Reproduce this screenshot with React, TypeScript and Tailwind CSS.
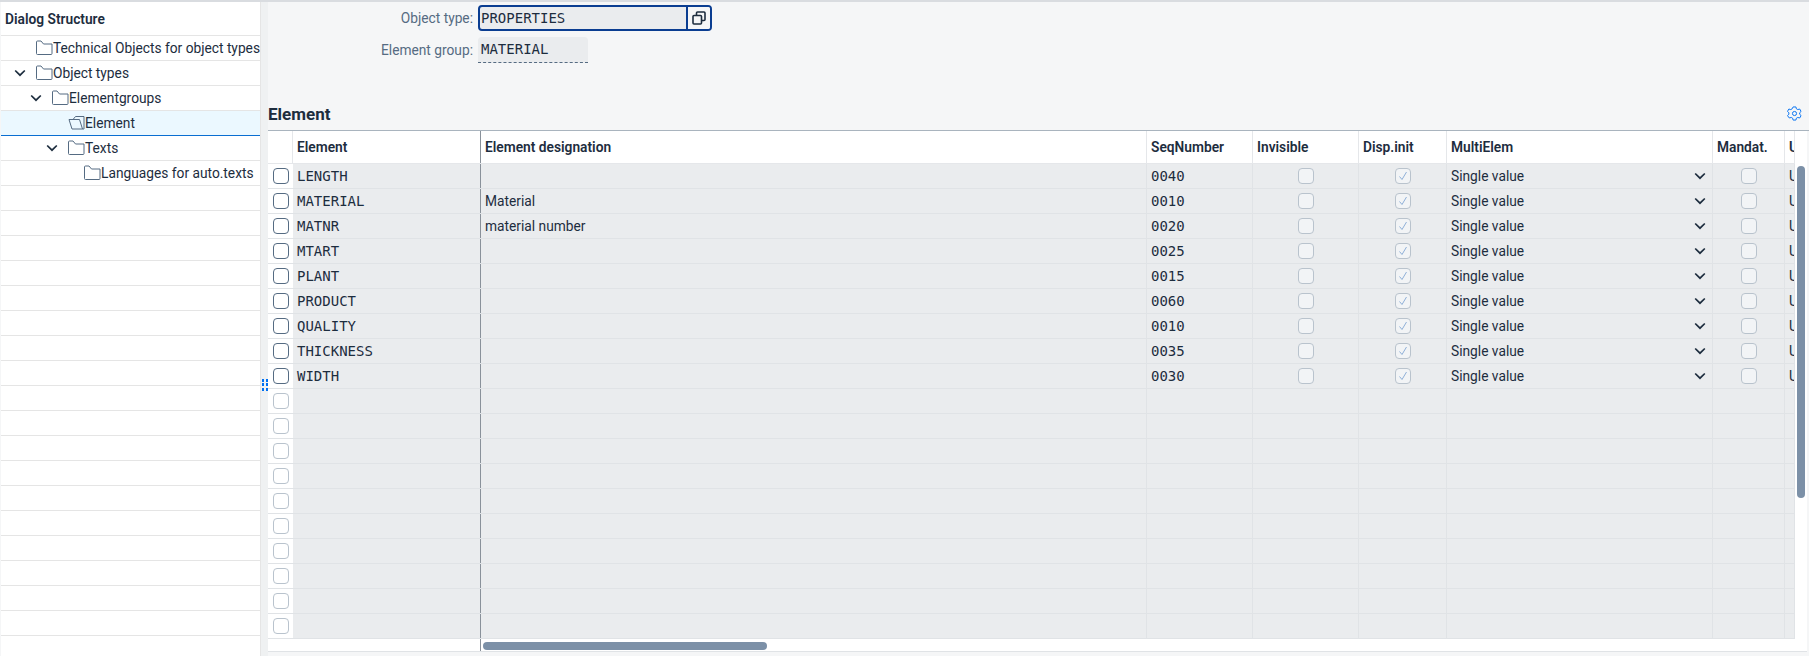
import React from 'react';

const Folder: React.FC<{ open?: boolean }> = ({ open }) => (
  <svg className="w-[17px] h-[16px] shrink-0" viewBox="0 0 17 16" fill="none" stroke="#556b82" strokeWidth="1">
    {open ? (
      <path d="M5 4.500 7.500 1.500h8.500v12.500H4L1 4.500h10.500l3 9.500" strokeLinejoin="round" />
    ) : (
      <path d="M.5 13.500V2a1 1 0 0 1 1-1H5l2.500 3h8.500v9.500a1 1 0 0 1-1 1H1.500a1 1 0 0 1-1-1z" strokeLinejoin="round" />
    )}
  </svg>
);

const Chevron: React.FC = () => (
  <svg className="w-[12px] h-[8px] shrink-0" viewBox="0 0 12 8" fill="none" stroke="#1d2d3e" strokeWidth="1.7">
    <path d="M1.200 1.500 6 6.200l4.800-4.700" />
  </svg>
);

const treeRows = [
  { label: 'Technical Objects for object types', indent: 'pl-[35px]' },
  { label: 'Object types', indent: 'pl-[13px]', chevron: true },
  { label: 'Elementgroups', indent: 'pl-[29px]', chevron: true },
  { label: 'Element', indent: 'pl-[67px]', open: true },
  { label: 'Texts', indent: 'pl-[45px]', chevron: true },
  { label: 'Languages for auto.texts', indent: 'pl-[83px]' },
];

const rows = [
  ['LENGTH', '', '0040'],
  ['MATERIAL', 'Material', '0010'],
  ['MATNR', 'material number', '0020'],
  ['MTART', '', '0025'],
  ['PLANT', '', '0015'],
  ['PRODUCT', '', '0060'],
  ['QUALITY', '', '0010'],
  ['THICKNESS', '', '0035'],
  ['WIDTH', '', '0030'],
];

const gridCols = 'grid-cols-[25px_188px_666px_106px_106px_88px_266px_72px_10px]';
const mono = "font-['DejaVu_Sans_Mono',monospace] text-[14px] text-[#1d2d3e]";

const ReadOnlyBox: React.FC<{ checked?: boolean }> = ({ checked }) => (
  <div className="w-[16px] h-[16px] rounded-[4px] border border-[#b9c3cd] bg-[#f2f4f6] flex items-center justify-center">
    {checked && (
      <svg className="w-[10px] h-[10px]" viewBox="0 0 10 10" fill="none" stroke="#8fb0d8" strokeWidth="1">
        <path d="M1.500 5.500 4 8.500 8.500 1" />
      </svg>
    )}
  </div>
);

const HeaderCell: React.FC<{ label?: string; dark?: boolean }> = ({ label, dark }) => (
  <div className={`flex items-center pl-[4px] overflow-hidden whitespace-nowrap font-semibold text-[#1d2d3e] border-r ${dark ? 'border-[#89919a]' : 'border-[#e5e7ea]'}`}>
    {label}
  </div>
);

const Cell: React.FC<{ children?: React.ReactNode; dark?: boolean; center?: boolean }> = ({ children, dark, center }) => (
  <div className={`flex items-center overflow-hidden whitespace-nowrap bg-[#eaecee] border-r ${center ? 'justify-center' : 'pl-[4px]'} ${dark ? 'border-[#89919a]' : 'border-[#e0e3e6]'}`}>
    {children}
  </div>
);

const DataRow: React.FC<{ row?: string[] }> = ({ row }) => (
  <div className={`grid ${gridCols} h-[25px] shrink-0 border-b border-[#e0e3e6]`}>
    <div className="flex items-center pl-[5px] bg-white">
      <div className={`w-[16px] h-[16px] rounded-[4px] border bg-white ${row ? 'border-[#556b82]' : 'border-[#b9c3cd]'}`} />
    </div>
    <Cell dark>{row && <span className={mono}>{row[0]}</span>}</Cell>
    <Cell>{row && <span>{row[1]}</span>}</Cell>
    <Cell>{row && <span className={mono}>{row[2]}</span>}</Cell>
    <Cell center>{row && <ReadOnlyBox />}</Cell>
    <Cell center>{row && <ReadOnlyBox checked />}</Cell>
    <Cell>
      {row && (
        <div className="flex flex-1 items-center justify-between pr-[6px]">
          <span>Single value</span>
          <Chevron />
        </div>
      )}
    </Cell>
    <Cell center>{row && <ReadOnlyBox />}</Cell>
    <Cell>{row && <span>U</span>}</Cell>
  </div>
);

const App: React.FC = () => {
  return (
    <div className="w-[1809px] h-[656px] overflow-hidden flex flex-col bg-[#f5f6f7] font-['Roboto',sans-serif] text-[13.75px] text-[#1d2d3e]">
      <div className="h-[2px] bg-[#d9dce0] shrink-0" />
      <div className="flex flex-1 min-h-0">
        {/* tree panel */}
        <div className="w-[260px] shrink-0 ml-[1px] bg-white border-r border-[#e5e5e5] flex flex-col overflow-hidden">
          <div className="h-[34px] shrink-0 flex items-center pl-[4px] pt-[2px] font-semibold border-b border-[#e5e5e5]">Dialog Structure</div>
          {treeRows.map((r) => (
            <div
              key={r.label}
              className={`h-[25px] shrink-0 flex items-center whitespace-nowrap border-b ${r.indent} ${r.open ? 'bg-[#ebf8ff] border-[#0a6ed1]' : 'border-[#e5e5e5]'}`}
            >
              {r.chevron && <span className="w-[22px] shrink-0 flex"><Chevron /></span>}
              <Folder open={r.open} />
              <span className="pt-[1px]">{r.label}</span>
            </div>
          ))}
          {Array.from({ length: 20 }).map((_, i) => (
            <div key={i} className="h-[25px] shrink-0 border-b border-[#e5e5e5]" />
          ))}
        </div>

        {/* splitter */}
        <div className="w-[7px] shrink-0 bg-[#eff1f2] relative">
          <div className="absolute left-[1px] top-[377px] w-[6px] h-[12px] grid grid-cols-2 gap-[1px]">
            {Array.from({ length: 6 }).map((_, i) => (
              <span key={i} className="w-[2px] h-[3px] bg-[#0070f2]" />
            ))}
          </div>
        </div>

        {/* detail */}
        <div className="flex-1 min-w-0 flex flex-col pb-[4px]">
          <div className="h-[93px] shrink-0 pt-[3px]">
            <div className="flex items-center h-[26px]">
              <span className="w-[210px] text-right pr-[5px] text-[#556b82]">Object type:</span>
              <div className="w-[234px] h-[26px] flex rounded-[4px] border-2 border-[#0a3d91] bg-[#eaecee] overflow-hidden">
                <span className={`${mono} flex-1 flex items-center pl-[1px]`}>PROPERTIES</span>
                <span className="w-[24px] flex items-center justify-center bg-[#f5f6f7] border-l-2 border-[#0a3d91]">
                  <svg className="w-[14px] h-[14px]" viewBox="0 0 14 14" fill="none" stroke="#1d2d3e" strokeWidth="1.6">
                    <rect x="1" y="4.500" width="8.500" height="8.500" rx="1" />
                    <path d="M4.500 4V2a1 1 0 0 1 1-1H12a1 1 0 0 1 1 1v6.500a1 1 0 0 1-1 1h-2" />
                  </svg>
                </span>
              </div>
            </div>
            <div className="flex items-center h-[26px] mt-[6px]">
              <span className="w-[210px] text-right pr-[5px] text-[#556b82]">Element group:</span>
              <div className={`${mono} w-[110px] h-[26px] flex items-center pl-[3px] bg-[#eaecee] rounded-t-[4px] border-b border-dashed border-[#556b82]`}>MATERIAL</div>
            </div>
          </div>

          <div className="h-[35px] shrink-0 flex items-center justify-between pr-[7px]">
            <span className="font-bold text-[17px] pt-[4px]">Element</span>
            <svg className="w-[15px] h-[15px] mt-[2px]" viewBox="0 0 16 16" fill="none" stroke="#0070f2" strokeWidth="1">
              <path d="M6.500 1h3l.5 2 1.500.8 2-.6 1.500 2.600-1.500 1.400v1.600l1.500 1.400-1.500 2.600-2-.6-1.500.8-.5 2h-3l-.5-2-1.500-.8-2 .6L.5 10.200 2 8.800V7.200L.5 5.800 2 3.200l2 .6L5.500 3z" strokeLinejoin="round" />
              <circle cx="8" cy="8" r="2.200" />
            </svg>
          </div>

          <div className="flex-1 min-h-0 flex flex-col border-t border-[#a9b4be]">
            <div className="flex flex-1 min-h-0">
              <div className="w-[1527px] shrink-0 flex flex-col overflow-hidden">
                <div className={`grid ${gridCols} h-[33px] bg-white shrink-0 border-b border-[#e5e7ea]`}>
                  <HeaderCell />
                  <HeaderCell label="Element" dark />
                  <HeaderCell label="Element designation" />
                  <HeaderCell label="SeqNumber" />
                  <HeaderCell label="Invisible" />
                  <HeaderCell label="Disp.init" />
                  <HeaderCell label="MultiElem" />
                  <HeaderCell label="Mandat." />
                  <HeaderCell label="U" />
                </div>
                {rows.map((r) => (
                  <DataRow key={r[0]} row={r} />
                ))}
                {Array.from({ length: 10 }).map((_, i) => (
                  <DataRow key={i} />
                ))}
              </div>
              <div className="w-[12px] shrink-0 bg-white pt-[35px] pl-[2px]">
                <div className="w-[8px] h-[332px] rounded-[4px] bg-[#7c90a7]" />
              </div>
            </div>
            <div className="h-[13px] shrink-0 mr-[2px] bg-white border-b border-[#e0e3e6] flex">
              <div className="w-[213px] h-[12px] border-r border-[#89919a]" />
              <div className="pl-[2px] pt-[3px]">
                <div className="w-[284px] h-[8px] rounded-[4px] bg-[#7c90a7]" />
              </div>
            </div>
          </div>
        </div>
      </div>
    </div>
  );
};

export default App;
